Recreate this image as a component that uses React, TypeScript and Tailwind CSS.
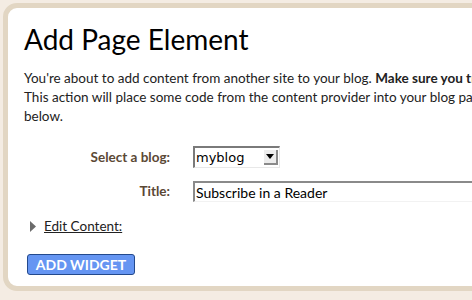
import React from "react";

export default function App() {
  return (
    <div
      className="w-[472px] h-[300px] overflow-hidden bg-[#f4ece3] pt-[3px] pl-[3px]"
      style={{ fontFamily: "Lato, 'Open Sans', sans-serif" }}
    >
      <div className="w-[620px] h-[288px] rounded-[14px] border-[5px] border-[#e2d6c3] bg-white pl-[16px] pt-[14px] text-[#1a1a1a]">
        <h1 className="text-[28px] leading-[34px] font-normal text-black">Add Page Element</h1>
        <div className="mt-[13px] text-[13.5px] leading-[19px] text-[#222] whitespace-nowrap">
          <div>
            You're about to add content from another site to your blog.{" "}
            <b>Make sure you trust this site and the code it provides.</b>
          </div>
          <div>This action will place some code from the content provider into your blog page, shown</div>
          <div>below.</div>
        </div>
        <div className="mt-[20px] flex items-center">
          <div className="w-[146px] text-right text-[13.5px] font-bold text-[#5b4835]">Select a blog:</div>
          <div className="ml-[23px] w-[87px] h-[22px] flex items-center border-t-2 border-l-2 border-[#7a7a7a] border-b border-r border-b-[#e8e8e8] border-r-[#e8e8e8] bg-white">
            <span className="flex-1 pl-[1px] text-[13px] text-black" style={{ fontFamily: "'DejaVu Sans', sans-serif" }}>myblog</span>
            <span className="w-[14px] h-[15px] mr-[1px] flex items-center justify-center bg-[#ececec] border-r-2 border-b-2 border-[#8a8a8a]">
              <svg width="8" height="5" viewBox="0 0 8 5"><path d="M0 0H8L4 5Z" fill="#000" /></svg>
            </span>
          </div>
        </div>
        <div className="mt-[13px] flex items-center">
          <div className="w-[146px] text-right text-[13.5px] font-bold text-[#5b4835]">Title:</div>
          <div className="ml-[23px] w-[400px] h-[21px] flex items-center border-t-2 border-l-2 border-[#8a8a8a] border-b border-r border-b-[#f2f2f2] border-r-[#f2f2f2]">
            <span className="pl-[1px] text-[14px] text-black">Subscribe in a Reader</span>
          </div>
        </div>
        <div className="mt-[14px] ml-[6px] flex items-center gap-[8px]">
          <svg width="6" height="11" viewBox="0 0 6 11"><path d="M0 0L6 5.5L0 11Z" fill="#6b6b6b" /></svg>
          <span className="text-[13.5px] underline text-[#222]">Edit Content:</span>
        </div>
        <button className="mt-[18px] ml-[3px] w-[108px] h-[21px] rounded-[3px] border border-[#23498c] bg-[#6595f2] text-white font-bold text-[14px] leading-none">
          ADD WIDGET
        </button>
      </div>
    </div>
  );
}
